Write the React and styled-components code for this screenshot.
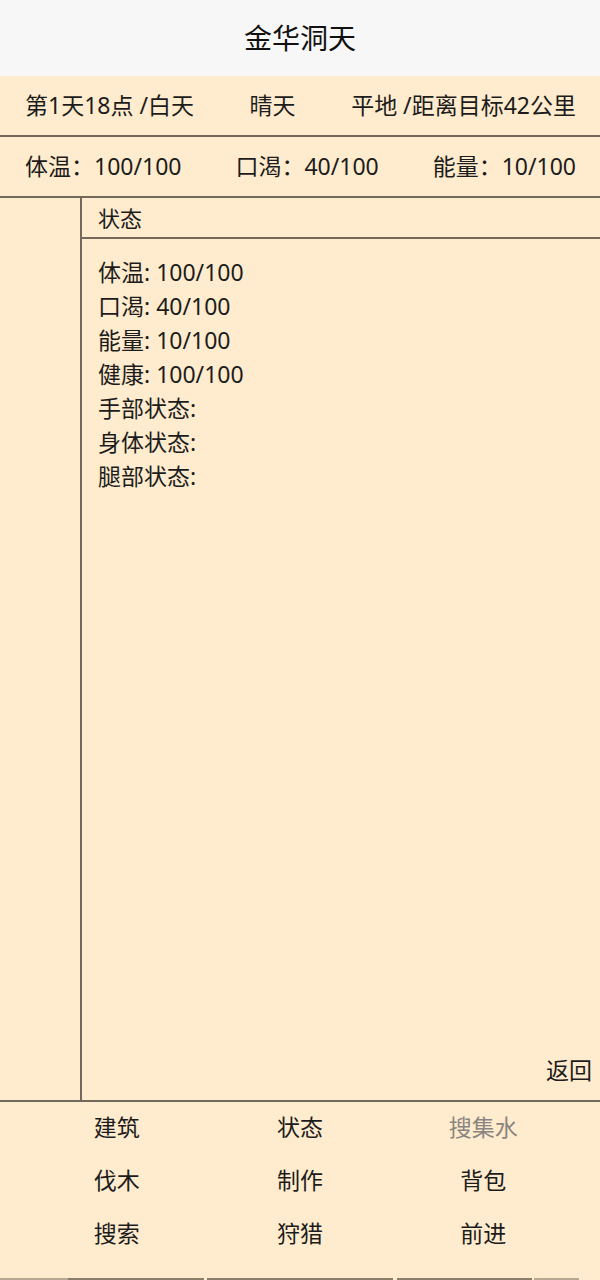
import React from 'react';
import styled, { createGlobalStyle } from 'styled-components';

const GlobalStyle = createGlobalStyle`
  html, body {
    margin: 0;
    padding: 0;
    background: #ffebcd;
  }
  body {
    font-family: "Noto Sans", "Noto Sans CJK SC", sans-serif;
    color: #1c1c1c;
  }
`;

const Page = styled.div`
  display: flex;
  flex-direction: column;
  width: 100%;
  height: 1280px;
  background: #ffebcd;
  overflow: hidden;
`;

const TitleBar = styled.div`
  height: 76px;
  display: flex;
  align-items: center;
  justify-content: center;
  background: #f7f7f7;
  font-size: 28px;
  color: #111;
  padding-bottom: 2px;
  box-sizing: border-box;
`;

const InfoRow = styled.div`
  height: 61px;
  box-sizing: border-box;
  display: flex;
  align-items: center;
  justify-content: space-between;
  padding: 0 24px 3px 25px;
  border-bottom: 2px solid #74685a;
  font-size: 23px;
  white-space: nowrap;
`;

const Main = styled.div`
  flex: 1;
  display: flex;
  min-height: 0;
  border-bottom: 2px solid #74685a;
`;

const SideColumn = styled.div`
  width: 80px;
  border-right: 2px solid #74685a;
`;

const Panel = styled.div`
  flex: 1;
  display: flex;
  flex-direction: column;
`;

const PanelHeader = styled.div`
  height: 41px;
  box-sizing: border-box;
  display: flex;
  align-items: center;
  padding: 0 0 2px 16px;
  border-bottom: 2px solid #74685a;
  font-size: 22px;
`;

const PanelBody = styled.div`
  flex: 1;
  display: flex;
  flex-direction: column;
  padding: 16px 8px 0 16px;
`;

const StatLine = styled.div`
  font-size: 23px;
  line-height: 34px;
`;

const BackLink = styled.div`
  margin-top: auto;
  align-self: flex-end;
  padding-bottom: 14px;
  font-size: 23px;
`;

const ActionGrid = styled.div`
  display: grid;
  grid-template-columns: repeat(3, 1fr);
  grid-auto-rows: 53px;
  padding: 0 25px;
  height: 176px;
  box-sizing: border-box;
  align-content: start;
`;

const Action = styled.div`
  display: flex;
  align-items: center;
  justify-content: center;
  padding-bottom: 5px;
  font-size: 23px;
  color: ${p => (p.disabled ? '#8a8580' : '#1c1c1c')};
`;

const TabStrip = styled.div`
  display: flex;
  height: 2px;
  margin-top: auto;
`;

const TabPiece = styled.div`
  width: ${p => p.w}px;
  margin-right: ${p => p.gap || 0}px;
  background: ${p => p.c};
`;

const stats = [
  '体温: 100/100',
  '口渴: 40/100',
  '能量: 10/100',
  '健康: 100/100',
  '手部状态:',
  '身体状态:',
  '腿部状态:',
];

const actions = [
  { label: '建筑' },
  { label: '状态' },
  { label: '搜集水', disabled: true },
  { label: '伐木' },
  { label: '制作' },
  { label: '背包' },
  { label: '搜索' },
  { label: '狩猎' },
  { label: '前进' },
];

export default function App() {
  return (
    <Page>
      <GlobalStyle />
      <TitleBar>金华洞天</TitleBar>
      <InfoRow>
        <span>第1天18点 /白天</span>
        <span>晴天</span>
        <span>平地 /距离目标42公里</span>
      </InfoRow>
      <InfoRow>
        <span>体温：100/100</span>
        <span>口渴：40/100</span>
        <span>能量：10/100</span>
      </InfoRow>
      <Main>
        <SideColumn />
        <Panel>
          <PanelHeader>状态</PanelHeader>
          <PanelBody>
            {stats.map(s => (
              <StatLine key={s}>{s}</StatLine>
            ))}
            <BackLink>返回</BackLink>
          </PanelBody>
        </Panel>
      </Main>
      <ActionGrid>
        {actions.map(a => (
          <Action key={a.label} disabled={a.disabled}>
            {a.label}
          </Action>
        ))}
      </ActionGrid>
      <TabStrip>
        <TabPiece w={68} c="#b8a892" />
        <TabPiece w={136} gap={3} c="#8c7f69" />
        <TabPiece w={186} gap={4} c="#8c7f69" />
        <TabPiece w={135} gap={2} c="#8c7f69" />
        <TabPiece w={45} c="#b8a892" />
      </TabStrip>
    </Page>
  );
}
